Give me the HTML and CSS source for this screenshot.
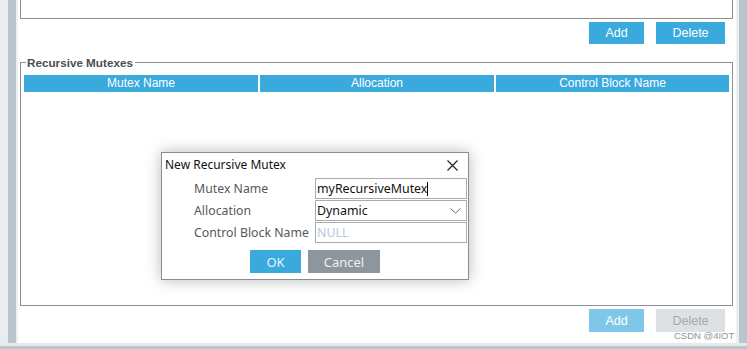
FILE: index.html
```html
<!DOCTYPE html>
<html>
<head>
<meta charset="utf-8">
<link rel="stylesheet" href="styles.css">
</head>
<body>
<div class="screen">
  <div class="top">
    <div class="gutter-left">
      <div class="g-light"></div>
      <div class="g-dark"></div>
      <div class="g-thin"></div>
    </div>
    <div class="main">
      <div class="upper-box"></div>
      <div class="btn-row top-row">
        <button class="btn blue">Add</button>
        <button class="btn blue del">Delete</button>
      </div>
      <fieldset class="group">
        <legend>Recursive Mutexes</legend>
        <div class="thead">
          <div class="th c1">Mutex Name</div>
          <div class="th c2">Allocation</div>
          <div class="th c3">Control Block Name</div>
        </div>
      </fieldset>
      <div class="btn-row bottom-row">
        <button class="btn blue-dis">Add</button>
        <button class="btn grey-dis del">Delete</button>
      </div>
    </div>
    <div class="gutter-right">
      <div class="g-thin"></div>
      <div class="g-dark"></div>
    </div>
  </div>
  <div class="strip-light"></div>
  <div class="strip-dark"></div>

  <div class="dialog">
    <div class="d-title">
      <span>New Recursive Mutex</span>
      <svg class="close" width="11" height="11" viewBox="0 0 11 11"><path d="M0.5 0.5 L10.5 10.5 M10.5 0.5 L0.5 10.5" stroke="#222" stroke-width="1.2" fill="none"/></svg>
    </div>
    <div class="d-form">
      <div class="lbl">Mutex Name</div>
      <div class="field"><span class="val">myRecursiveMutex</span><span class="caret"></span></div>
      <div class="lbl">Allocation</div>
      <div class="field sel"><span class="val">Dynamic</span>
        <svg class="chev" width="11" height="6" viewBox="0 0 11 6"><path d="M0.5 0.5 L5.5 5 L10.5 0.5" stroke="#666" stroke-width="1" fill="none"/></svg>
      </div>
      <div class="lbl">Control Block Name</div>
      <div class="field"><span class="ph">NULL</span></div>
    </div>
    <div class="d-btns">
      <button class="dbtn ok">OK</button>
      <button class="dbtn cancel">Cancel</button>
    </div>
  </div>
  <div class="watermark">CSDN @4IOT</div>
</div>
</body>
</html>
```

FILE: styles.css
```css
* { box-sizing: border-box; }
html, body { margin: 0; padding: 0; }
body { background: #ffffff; font-family: "Liberation Sans", Arial, sans-serif; }

.screen {
  position: relative;
  width: 747px;
  height: 349px;
  overflow: hidden;
  display: flex;
  flex-direction: column;
}
.top { display: flex; height: 343px; }
.gutter-left { display: flex; width: 18px; }
.g-light { width: 8px; background: #e9edef; }
.g-dark { width: 8px; background: #b8c5cb; }
.g-thin { width: 2px; background: #edf0f2; }
.gutter-right { display: flex; width: 11px; }
.gutter-right .g-thin { width: 3px; }
.gutter-right .g-dark { width: 8px; }
.strip-light { height: 3px; background: #e6eaec; }
.strip-dark { height: 3px; background: #b8c5cb; }

.main { flex: 1; background: #fff; display: flex; flex-direction: column; }

.upper-box {
  height: 19px;
  margin: 0 3px 0 2px;
  border: 1px solid #8e9194;
  border-top: none;
}

.btn-row { display: flex; justify-content: flex-end; gap: 12px; padding-right: 11px; }
.top-row { margin-top: 3px; }
.bottom-row { margin-top: 3px; }
.btn {
  width: 55px;
  height: 22px;
  border: none;
  padding: 0;
  font-family: "Liberation Sans", Arial, sans-serif;
  font-size: 12.5px;
  color: #fff;
}
.btn.del { width: 69px; }
.blue { background: #3aa9dc; }
.blue-dis { background: #7fc7e9; height: 23px; }
.grey-dis { background: #dde1e4; color: #a3a9ad; height: 23px; }

.group {
  margin: 12px 3px 0 2px;
  padding: 3px 3px 0 3px;
  border: 1px solid #8e9194;
  height: 250px;
  min-width: 0;
}
.group legend {
  padding: 0 2px 0 1px;
  margin-left: 2px;
  font-weight: bold;
  font-size: 11.7px;
  color: #4a4d52;
  line-height: 13px;
}
.thead { display: flex; gap: 2px; margin-top: 3px; }
.th {
  background: #3aa9dc;
  color: #fff;
  height: 17px;
  line-height: 17px;
  text-align: center;
  font-size: 12px;
}
.c1 { width: 234px; }
.c2 { width: 234px; }
.c3 { flex: 1; }

.dialog {
  position: absolute;
  left: 161px;
  top: 152px;
  width: 308px;
  height: 128px;
  background: #fff;
  border: 1px solid #8a8c8e;
  box-shadow: 0 0 14px rgba(0,0,0,0.28);
  font-family: "Noto Sans", "Open Sans", sans-serif;
  font-size: 12px;
}
.d-title {
  display: flex;
  justify-content: space-between;
  align-items: center;
  height: 22px;
  padding: 1px 10px 0 3px;
  color: #111;
}
.close { margin-top: 1px; }
.d-form {
  display: grid;
  grid-template-columns: 121px 152px;
  grid-auto-rows: 21px;
  row-gap: 1px;
  padding-left: 32px;
  margin-top: 3px;
}
.lbl { color: #55585c; line-height: 21px; font-size: 12.3px; }
.field {
  border: 1px solid #a9abad;
  height: 21px;
  display: flex;
  align-items: center;
  padding-left: 1px;
  position: relative;
  font-size: 12.4px;
  color: #111;
}
.caret { width: 1px; height: 14px; background: #000; }
.sel { justify-content: space-between; padding-right: 5px; }
.ph { color: #b9c8dc; }
.d-btns { display: flex; gap: 7px; padding-left: 88px; margin-top: 7px; }
.dbtn {
  height: 23px;
  border: none;
  padding: 0;
  font-family: "Noto Sans", "Open Sans", sans-serif;
  font-size: 13px;
  color: #e8f4fb;
}
.ok { width: 51px; background: #3aa9dc; }
.cancel { width: 72px; background: #8f969b; color: #f0f0f0; }

.watermark {
  position: absolute;
  left: 674px;
  top: 330px;
  font-family: "Liberation Sans", Arial, sans-serif;
  font-size: 9.5px;
  color: #8f9498;
}
```
